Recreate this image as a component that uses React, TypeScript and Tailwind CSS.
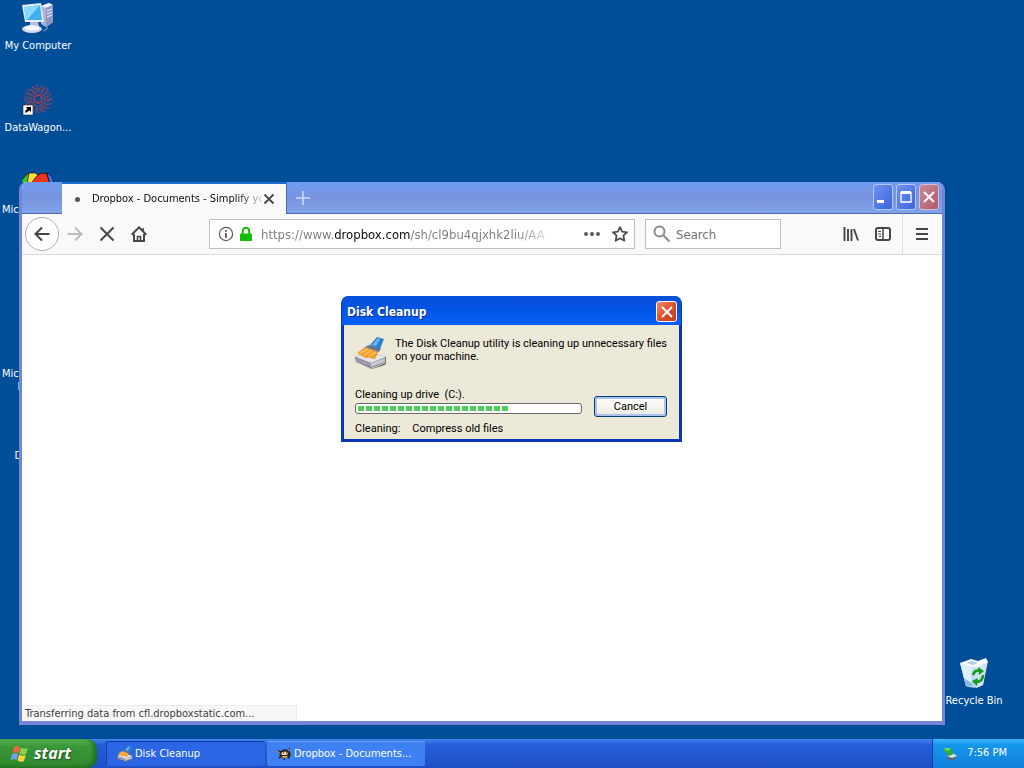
import React from "react";

const UI_FONT = "font-['DejaVu_Sans_Condensed','Noto_Sans',sans-serif]";

function ComputerIcon() {
  return (
    <svg viewBox="0 0 32 32" className="w-8 h-8" aria-hidden="true">
      <path d="M19 4 L27 1 L31 3 V20 L24 25 L19 22 Z" fill="#aab2d8" />
      <path d="M19 4 L27 1 L31 3 L24 6 Z" fill="#eef0fb" />
      <path d="M24 6 L31 3 V20 L24 25 Z" fill="#8f98c4" />
      <path d="M25 9 L30 7 M25 12 L30 10 M25 15 L30 13" stroke="#e6e9fa" strokeWidth="1.2" />
      <path d="M0 3 L19 1 L22 20 L3 20 Z" fill="#e8ecf8" />
      <path d="M2 5 L18 3 L20 18 L4 18 Z" fill="#3fb0ef" />
      <path d="M2 5 L18 3 L6 17 L4 18 Z" fill="#8ad8fb" />
      <path d="M8 20 h8 l1 4 h-9 Z" fill="#b8bedb" />
      <ellipse cx="10" cy="27" rx="10" ry="4" fill="#d3d8ee" />
      <ellipse cx="10" cy="26" rx="7.500" ry="2.500" fill="#f6f7fd" />
      <path d="M21 23 q5 0 4 4 l-4 2" stroke="#9fa8cc" fill="none" />
    </svg>
  );
}

function WagonIcon() {
  const spokes = Array.from({ length: 16 }, (_, i) => i * 22.5);
  return (
    <svg viewBox="0 0 32 32" className="w-8 h-8" aria-hidden="true">
      <g fill="none" strokeWidth="1.5">
        <circle cx="16" cy="15" r="13" stroke="#5d4b88" strokeDasharray="2 2.2" />
        <circle cx="16" cy="15" r="10" stroke="#83405f" strokeDasharray="3 2" />
        <circle cx="16" cy="15" r="7" stroke="#5f4c8c" strokeDasharray="2 1.5" />
        <circle cx="16" cy="15" r="4" stroke="#a03c48" strokeWidth="2" />
      </g>
      {spokes.map((a) => (
        <path key={a} d="M16 9 L18 5 L15 1" transform={`rotate(${a} 16 15)`} stroke="#8c4458" fill="none" />
      ))}
      <rect x="1" y="21" width="10" height="10" fill="#fff" stroke="#222" strokeWidth="0.6" />
      <path d="M3.500 29 q-1 -3 2 -4 l-1.500 -2 h5 v5 l-1.500 -1.500 q-2 1 -4 2.500 Z" fill="#000" />
    </svg>
  );
}

function ColourIcon() {
  return (
    <svg viewBox="0 0 32 32" className="w-8 h-8" aria-hidden="true">
      <path d="M0 14 L5 8 L9 8 L6 18 H0 Z" fill="#38c438" stroke="#000" strokeWidth="0.6" />
      <path d="M7 7 L14 7 L16 10 L12 18 H5 Z" fill="#ffd83a" stroke="#000" strokeWidth="0.6" />
      <path d="M13 12 Q19 5 25 8 L28 18 H9 Z" fill="#ee3418" stroke="#000" strokeWidth="0.6" />
      <path d="M25 7 Q30 9 31 14 L31 18 H28 Z" fill="#3c7cf0" stroke="#000" strokeWidth="0.6" />
    </svg>
  );
}

function RecycleIcon() {
  return (
    <svg viewBox="0 0 32 32" className="w-8 h-8" aria-hidden="true">
      <path d="M2 6 L29 5 L25 28 Q18 33 8 29 Z" fill="#b9d7ec" />
      <path d="M2 6 L14 9 L13 30 L8 29 Z" fill="#e0f0fb" />
      <path d="M14 9 L30 4 L25 28 L18 31 Z" fill="#cde3f2" />
      <path d="M2 6 L13 2 L20 4 L28 1 L30 5 L20 10 L12 9 Z" fill="#f8fdff" />
      <path d="M8 6 L14 4 L20 6 L15 8 Z" fill="#b3d0e8" />
      <path d="M6 21 L15 27 L14 30 L8 29 Z" fill="#8db9de" />
      <g fill="none" stroke="#159a22" strokeWidth="2.600">
        <path d="M15 18 Q17 12 22 14" />
        <path d="M25 18 Q25 24 19 25" />
      </g>
      <path d="M20 10 L26 14 L21 18 Z M20 21 L14 24 L19 29 Z" fill="#159a22" />
    </svg>
  );
}

function CleanupIcon({ className }: { className: string }) {
  return (
    <svg viewBox="0 0 32 32" className={className} aria-hidden="true">
      <path d="M2 25 L16 32 L32 25 L30 28 L17 32 Z" fill="#77756b" />
      <path d="M0 20 L14 15 L31 20 L31 25 L16 31 L1 25 Z" fill="#686874" />
      <path d="M0 20 L14 15 L31 20 L16 26 Z" fill="#e3e3ea" />
      <path d="M1 21 L16 26 V30 L1 25 Z" fill="#9a9aa8" />
      <path d="M16 26 L30 21 V25 L16 30 Z" fill="#c8c8d4" />
      <path d="M2 16 L10 10 L24 14 L20 22 L15 21 L10 21 Z" fill="#f2a032" />
      <path d="M5 16 L13 12 M9 18 L17 13 M13 20 L21 15" stroke="#ffc46c" strokeWidth="1.3" />
      <path d="M10 10 L14 8 L26 11 L24 15 Z" fill="#5f7890" />
      <path d="M15 8 L22 0 L29 2 L25 12 Z" fill="#2f82cf" />
      <path d="M17 8 L23 1 L25 2 L21 9 Z" fill="#6cb6ec" />
    </svg>
  );
}

function BrowserTaskIcon() {
  return (
    <svg viewBox="0 0 16 16" className="w-4 h-4" aria-hidden="true">
      <path d="M1 4 L5 5 L8 3 L11 4 L14 1 L13 5 L15 8 L13 13 L11 11 L8 14 L6 11 L2 13 L4 9 Z" fill="#2c241c" />
      <path d="M5 7 Q9 4 12 7 L11 9 H6 Z" fill="#f2dcae" />
      <path d="M6 10 L12 10 L10 12 H7 Z" fill="#e6a83e" />
      <path d="M7 7 h1 M10 7 h1" stroke="#000" />
      <path d="M1 5 L4 7 M13 3 L12 5" stroke="#b9a488" />
    </svg>
  );
}

function WindowsFlag() {
  return (
    <svg viewBox="0 0 20 20" className="w-5 h-5 shrink-0" aria-hidden="true">
      <path d="M4 3 Q7 1 10 3 L8.500 9 Q5.500 7.500 2.500 9 Z" fill="#f1643a" />
      <path d="M11 3.500 Q14 5.500 18 4 L16 10 Q13 11.500 9.500 9.500 Z" fill="#8dd04a" />
      <path d="M2 10 Q5 8.500 8.200 10 L6.500 16 Q4 14.500 0.500 16 Z" fill="#6ba0f4" />
      <path d="M9.200 10.500 Q12 12.500 15.700 11 L14 17 Q11 18.500 7.500 16.500 Z" fill="#ffd23e" />
    </svg>
  );
}

function TrayIcon() {
  return (
    <svg viewBox="0 0 16 16" className="w-4 h-4" aria-hidden="true">
      <path d="M4 10 L10 7 L14 10 L9 15 L4 13 Z" fill="#5c6470" />
      <path d="M4 10 L10 7 L14 10 L9 12 Z" fill="#dfe2e8" />
      <path d="M1 2 L7 2 L9 4 L9 6 L11 8 L6 10 L4 7 L1 6 Z" fill="#2fae3b" />
      <path d="M1 2 L7 2 L7 4 L3 5 Z" fill="#6ed866" />
    </svg>
  );
}

type Shortcut = { label: string; icon?: React.ReactNode };

const shortcuts: Shortcut[] = [
  { label: "My Computer", icon: <ComputerIcon /> },
  { label: "DataWagon...", icon: <WagonIcon /> },
  { label: "Microsoft Off...", icon: <ColourIcon /> },
  { label: "" },
  { label: "Microsoft Off...\nExplorer" },
  { label: "Database" },
];

function DesktopIcon({ label, icon }: Shortcut) {
  return (
    <div className="w-[76px] h-[82px] flex flex-col items-center gap-[5px] text-white text-[11px] leading-[13px] text-center">
      <div className="w-8 h-8 shrink-0">{icon}</div>
      <span className="whitespace-pre">{label}</span>
    </div>
  );
}

const toolBtn = "w-8 h-8 flex items-center justify-center shrink-0";

function Browser() {
  return (
    <section className="absolute left-[19px] right-[79px] top-[182px] bottom-[14px] flex flex-col rounded-t-lg overflow-hidden border-x-[3px] border-b-4 border-[#7485d8] bg-white">
      <header className="h-8 shrink-0 flex bg-linear-to-b from-[#6f9cf0] via-[#7894de] to-[#83a3ea]">
        <div className="w-10 border-b border-[#4d69b4]" />
        <div className="w-[224px] h-full flex items-center bg-[#f9f9fa] border-t-2 border-[#1c6fd2] text-[11px] text-[#0c0c0d]">
          <span className="w-[5px] h-[5px] ml-[13px] mr-3 rounded-full bg-[#55555a]" />
          <span className="w-[170px] whitespace-nowrap bg-[linear-gradient(90deg,#0c0c0d_145px,transparent_174px)] bg-clip-text text-transparent">
            Dropbox - Documents - Simplify yo
          </span>
          <button className="w-4 h-5 -ml-px flex items-center justify-center" aria-label="Close tab">
            <svg viewBox="0 0 12 12" className="w-3 h-3"><path d="M1.500 1.500 L10.500 10.500 M10.500 1.500 L1.500 10.500" stroke="#45454a" strokeWidth="1.8" /></svg>
          </button>
        </div>
        <div className="flex-1 flex items-center border-l border-b border-[#4d69b4]">
          <button className="w-8 h-full flex items-center justify-center" aria-label="New tab">
            <svg viewBox="0 0 14 14" className="w-3.5 h-3.5"><path d="M7 0 V14 M0 7 H14" stroke="#c9d9fa" strokeWidth="1.6" /></svg>
          </button>
        </div>
        <div className="flex gap-[3px] pr-[3px] pt-0.5 pb-[3px] border-b border-[#4d69b4]">
          <button className="w-5 flex items-center justify-center rounded-[3px] border border-[#b4c6f4] bg-linear-to-br from-[#6f93ee] to-[#3c62dc]" aria-label="Minimize">
            <svg viewBox="0 0 14 14" className="w-3.5 h-3.5"><path d="M1 11.500 H8" stroke="#fff" strokeWidth="3" /></svg>
          </button>
          <button className="w-5 flex items-center justify-center rounded-[3px] border border-[#b4c6f4] bg-linear-to-br from-[#6f93ee] to-[#3c62dc]" aria-label="Maximize">
            <svg viewBox="0 0 14 14" className="w-3.5 h-3.5" fill="none" stroke="#fff"><path d="M2 2.500 H12" strokeWidth="3" /><path d="M2 2 V12 H12 V2" strokeWidth="1.3" /></svg>
          </button>
          <button className="w-5 flex items-center justify-center rounded-[3px] border border-[#c9c0e0] bg-linear-to-br from-[#c98a98] to-[#b05a68]" aria-label="Close">
            <svg viewBox="0 0 14 14" className="w-3.5 h-3.5"><path d="M2 2 L12 12 M12 2 L2 12" stroke="#fff" strokeWidth="2" /></svg>
          </button>
        </div>
      </header>

      <nav className="h-[41px] shrink-0 flex items-center bg-[#f9f9fa] border-b border-[#dadadb]">
        <button className="w-[34px] h-[34px] ml-[3px] flex items-center justify-center rounded-full border border-[#b1b1b3] bg-white" aria-label="Back">
          <svg viewBox="0 0 16 16" className="w-4 h-4" fill="none" stroke="#45454a" strokeWidth="2"><path d="M15.500 8 H2 M8 1.500 L1.500 8 L8 14.500" /></svg>
        </button>
        <button className={toolBtn} aria-label="Forward" disabled>
          <svg viewBox="0 0 16 16" className="w-4 h-4" fill="none" stroke="#bdbdbf" strokeWidth="2"><path d="M0.500 8 H14 M8 1.500 L14.500 8 L8 14.500" /></svg>
        </button>
        <button className={toolBtn} aria-label="Stop">
          <svg viewBox="0 0 16 16" className="w-4 h-4" stroke="#45454a" strokeWidth="2"><path d="M1.500 1.500 L14.500 14.500 M14.500 1.500 L1.500 14.500" /></svg>
        </button>
        <button className={toolBtn} aria-label="Home">
          <svg viewBox="0 0 16 16" className="w-4 h-4" fill="none" stroke="#45454a" strokeWidth="2">
            <path d="M0.700 8.700 L8 1.400 L15.300 8.700" />
            <path d="M3 8 V15 H13 V8" />
            <path d="M6.500 15 V10.500 H9.500 V15" strokeWidth="1.6" />
            <path d="M12 5 V2" strokeWidth="1.6" />
          </svg>
        </button>
        <div className="flex-1 h-[30px] ml-[54px] flex items-center border border-[#bfbfc1] bg-white">
          <svg viewBox="0 0 16 16" className="w-4 h-4 ml-2 shrink-0" fill="none" stroke="#5a5a5e">
            <circle cx="8" cy="8" r="6.600" strokeWidth="1.2" />
            <path d="M8 7 V12 M8 4 V5.700" strokeWidth="1.8" />
          </svg>
          <svg viewBox="0 0 14 16" className="w-3.5 h-4 ml-[5px] shrink-0">
            <path d="M3.800 8 V5 a3.200 3.200 0 0 1 6.400 0 V8" fill="none" stroke="#12bc00" strokeWidth="2" />
            <rect x="1" y="7.500" width="12" height="7.500" rx="1" fill="#12bc00" />
          </svg>
          <input
            aria-label="Address"
            readOnly
            value="https://www.dropbox.com/sh/cl9bu4qjxhk2liu/AA"
            className="flex-1 min-w-0 ml-2 h-6 outline-none text-[13px] text-transparent bg-clip-text bg-[linear-gradient(90deg,#7b7b7e_73px,#0c0c0d_73px,#0c0c0d_149px,#7b7b7e_149px,#7b7b7e_255px,transparent_295px)]"
          />
          <button className="w-7 h-7 flex items-center justify-center shrink-0" aria-label="Page actions">
            <svg viewBox="0 0 18 6" className="w-[18px] h-1.5" fill="#5a5a5e"><circle cx="3" cy="3" r="2" /><circle cx="9" cy="3" r="2" /><circle cx="15" cy="3" r="2" /></svg>
          </button>
          <button className="w-7 h-7 flex items-center justify-center shrink-0" aria-label="Bookmark">
            <svg viewBox="0 0 16 16" className="w-4 h-4" fill="none" stroke="#4d4d52" strokeWidth="1.8" strokeLinejoin="round"><path d="M8 1.200 L10.100 5.700 L15 6.300 L11.400 9.700 L12.300 14.700 L8 12.300 L3.700 14.700 L4.600 9.700 L1 6.300 L5.900 5.700 Z" /></svg>
          </button>
        </div>
        <div className="w-[136px] h-[30px] ml-2.5 flex items-center border border-[#bfbfc1] bg-white">
          <svg viewBox="0 0 18 18" className="w-[18px] h-[18px] ml-[7px] shrink-0" fill="none" stroke="#8a8a8d" strokeWidth="2"><circle cx="6.500" cy="6.500" r="5" /><path d="M10.500 10.500 L16.500 16.500" /></svg>
          <input aria-label="Search" placeholder="Search" className="flex-1 min-w-0 ml-[5px] h-6 outline-none text-[13px] placeholder:text-[#737376]" />
        </div>
        <div className="w-[54px]" />
        <button className={toolBtn} aria-label="Library">
          <svg viewBox="0 0 16 16" className="w-4 h-4" stroke="#45454a" strokeWidth="1.900"><path d="M1.500 1 V15 M5 3 V15 M8.500 3 V15 M11 3 L15 14.500" /></svg>
        </button>
        <button className={toolBtn} aria-label="Sidebars">
          <svg viewBox="0 0 16 16" className="w-4 h-4" fill="none" stroke="#45454a"><rect x="1" y="2" width="14" height="12" rx="2" strokeWidth="2" /><path d="M8 2 V14" strokeWidth="1.500" /><path d="M3 5.500 H6 M3 8 H6 M4 10.500 H6" /></svg>
        </button>
        <div className="h-full ml-[3px] px-[3px] pr-1 flex items-center border-l border-[#e2e2e3]">
          <button className={toolBtn} aria-label="Menu">
            <svg viewBox="0 0 16 16" className="w-4 h-4" stroke="#45454a" strokeWidth="2"><path d="M2 3 H14 M2 8 H14 M2 13 H14" /></svg>
          </button>
        </div>
      </nav>

      <main className="flex-1 flex flex-col justify-end items-start bg-white">
        <p className="w-[275px] pl-[3px] pt-px border-t border-r border-[#ececec] bg-[#f7f7f7] text-[11px] leading-[14px] text-[#404044]">
          Transferring data from cfl.dropboxstatic.com...
        </p>
      </main>
    </section>
  );
}

function CleanupDialog() {
  const chunks = Array.from({ length: 19 });
  return (
    <section
      role="dialog"
      aria-label="Disk Cleanup progress"
      className="absolute left-[341px] top-[296px] w-[341px] rounded-t-lg border-x-[3px] border-b-[3px] border-[#0a35b4] bg-[#ece9d8] font-['Roboto','Liberation_Sans',sans-serif] text-[11px] leading-[13px] text-black"
    >
      <header className="-mx-0.5 h-[29px] flex items-center justify-between pl-[5px] pr-1 pt-0.5 rounded-t-md bg-linear-to-b from-[#0a50d8] via-[#0055e5] to-[#0660fa]">
        <h1 className="font-['DejaVu_Sans_Condensed','Noto_Sans',sans-serif] text-xs font-bold text-white [text-shadow:1px_1px_#0a3090]">Disk Cleanup</h1>
        <button className="w-[21px] h-[21px] flex items-center justify-center rounded-[3px] border border-white bg-linear-to-br from-[#ec8a6c] via-[#de5030] to-[#c03a18]" aria-label="Close">
          <svg viewBox="0 0 14 14" className="w-3.5 h-3.5"><path d="M2 2 L12 12 M12 2 L2 12" stroke="#fff" strokeWidth="2" /></svg>
        </button>
      </header>
      <div className="pl-[11px] pr-3 pt-3 pb-1">
        <div className="flex gap-2 h-[51px]">
          <CleanupIcon className="w-8 h-8 shrink-0" />
          <p>The Disk Cleanup utility is cleaning up unnecessary files on your machine.</p>
        </div>
        <div className="flex gap-3">
          <div className="flex-1">
            <p id="drive">Cleaning up drive&nbsp; (C:).</p>
            <div
              role="progressbar"
              aria-labelledby="drive"
              aria-valuenow={68}
              className="h-[11px] mt-0.5 px-0.5 flex items-center gap-0.5 rounded-[3px] border border-[#686868] bg-white"
            >
              {chunks.map((_, i) => (
                <span key={i} className="w-1.5 h-[5px] bg-[#4fcf57]" />
              ))}
            </div>
          </div>
          <button className="w-[73px] h-[21px] mt-2 rounded-[3px] border border-[#003c74] bg-linear-to-b from-white to-[#eceadf] shadow-[inset_0_0_0_2px_#a9c4ee]">Cancel</button>
        </div>
        <p className="mt-[5px] flex gap-3">
          <span>Cleaning:</span>
          <span>Compress old files</span>
        </p>
      </div>
    </section>
  );
}

function Taskbar() {
  return (
    <footer className="h-[29px] shrink-0 flex items-stretch bg-linear-to-b from-[#3f85f0] via-[#245edb] via-20% to-[#1f4fc4] text-[11px] text-white">
      <button className="w-[97px] flex items-center gap-1 pl-2.5 rounded-r-[10px] bg-linear-to-b from-[#5cb55a] via-[#3a9838] via-25% to-[#2f8a2e] shadow-[inset_-3px_-1px_4px_#1d6a20]">
        <WindowsFlag />
        <span className="pb-0.5 font-['Open_Sans',sans-serif] text-base leading-5 font-bold italic [text-shadow:1px_1px_2px_#1c4a1c]">start</span>
      </button>
      <div className="flex-1 flex gap-0.5 pl-[9px] pt-0.5 pb-0.5">
        <button className="w-[159px] flex items-center gap-0.5 pl-2.5 rounded-[2px] bg-[#2a66e4] border-l border-t border-[#173f9e]">
          <CleanupIcon className="w-4 h-4" />
          <span>Disk Cleanup</span>
        </button>
        <button className="w-[158px] flex items-center gap-0.5 pl-[9px] rounded-[2px] bg-[#3d81f2] border-t border-[#6aa0fa]">
          <BrowserTaskIcon />
          <span>Dropbox - Documents...</span>
        </button>
      </div>
      <div className="w-[92px] flex items-center justify-between pl-2.5 pr-[17px] border-l border-[#0f3f9c] bg-linear-to-b from-[#3cb4fa] via-[#1496ec] via-20% to-[#1280dc]">
        <TrayIcon />
        <time>7:56 PM</time>
      </div>
    </footer>
  );
}

export default function App() {
  return (
    <div className={`h-screen flex flex-col overflow-hidden bg-[#004e98] ${UI_FONT}`}>
      <div className="relative flex-1 min-h-0">
        <div className="flex flex-col pt-0.5">
          {shortcuts.map((s, i) => (
            <DesktopIcon key={i} {...s} />
          ))}
        </div>
        <div className="absolute right-3 bottom-0">
          <DesktopIcon label="Recycle Bin" icon={<RecycleIcon />} />
        </div>
        <Browser />
        <CleanupDialog />
      </div>
      <Taskbar />
    </div>
  );
}
